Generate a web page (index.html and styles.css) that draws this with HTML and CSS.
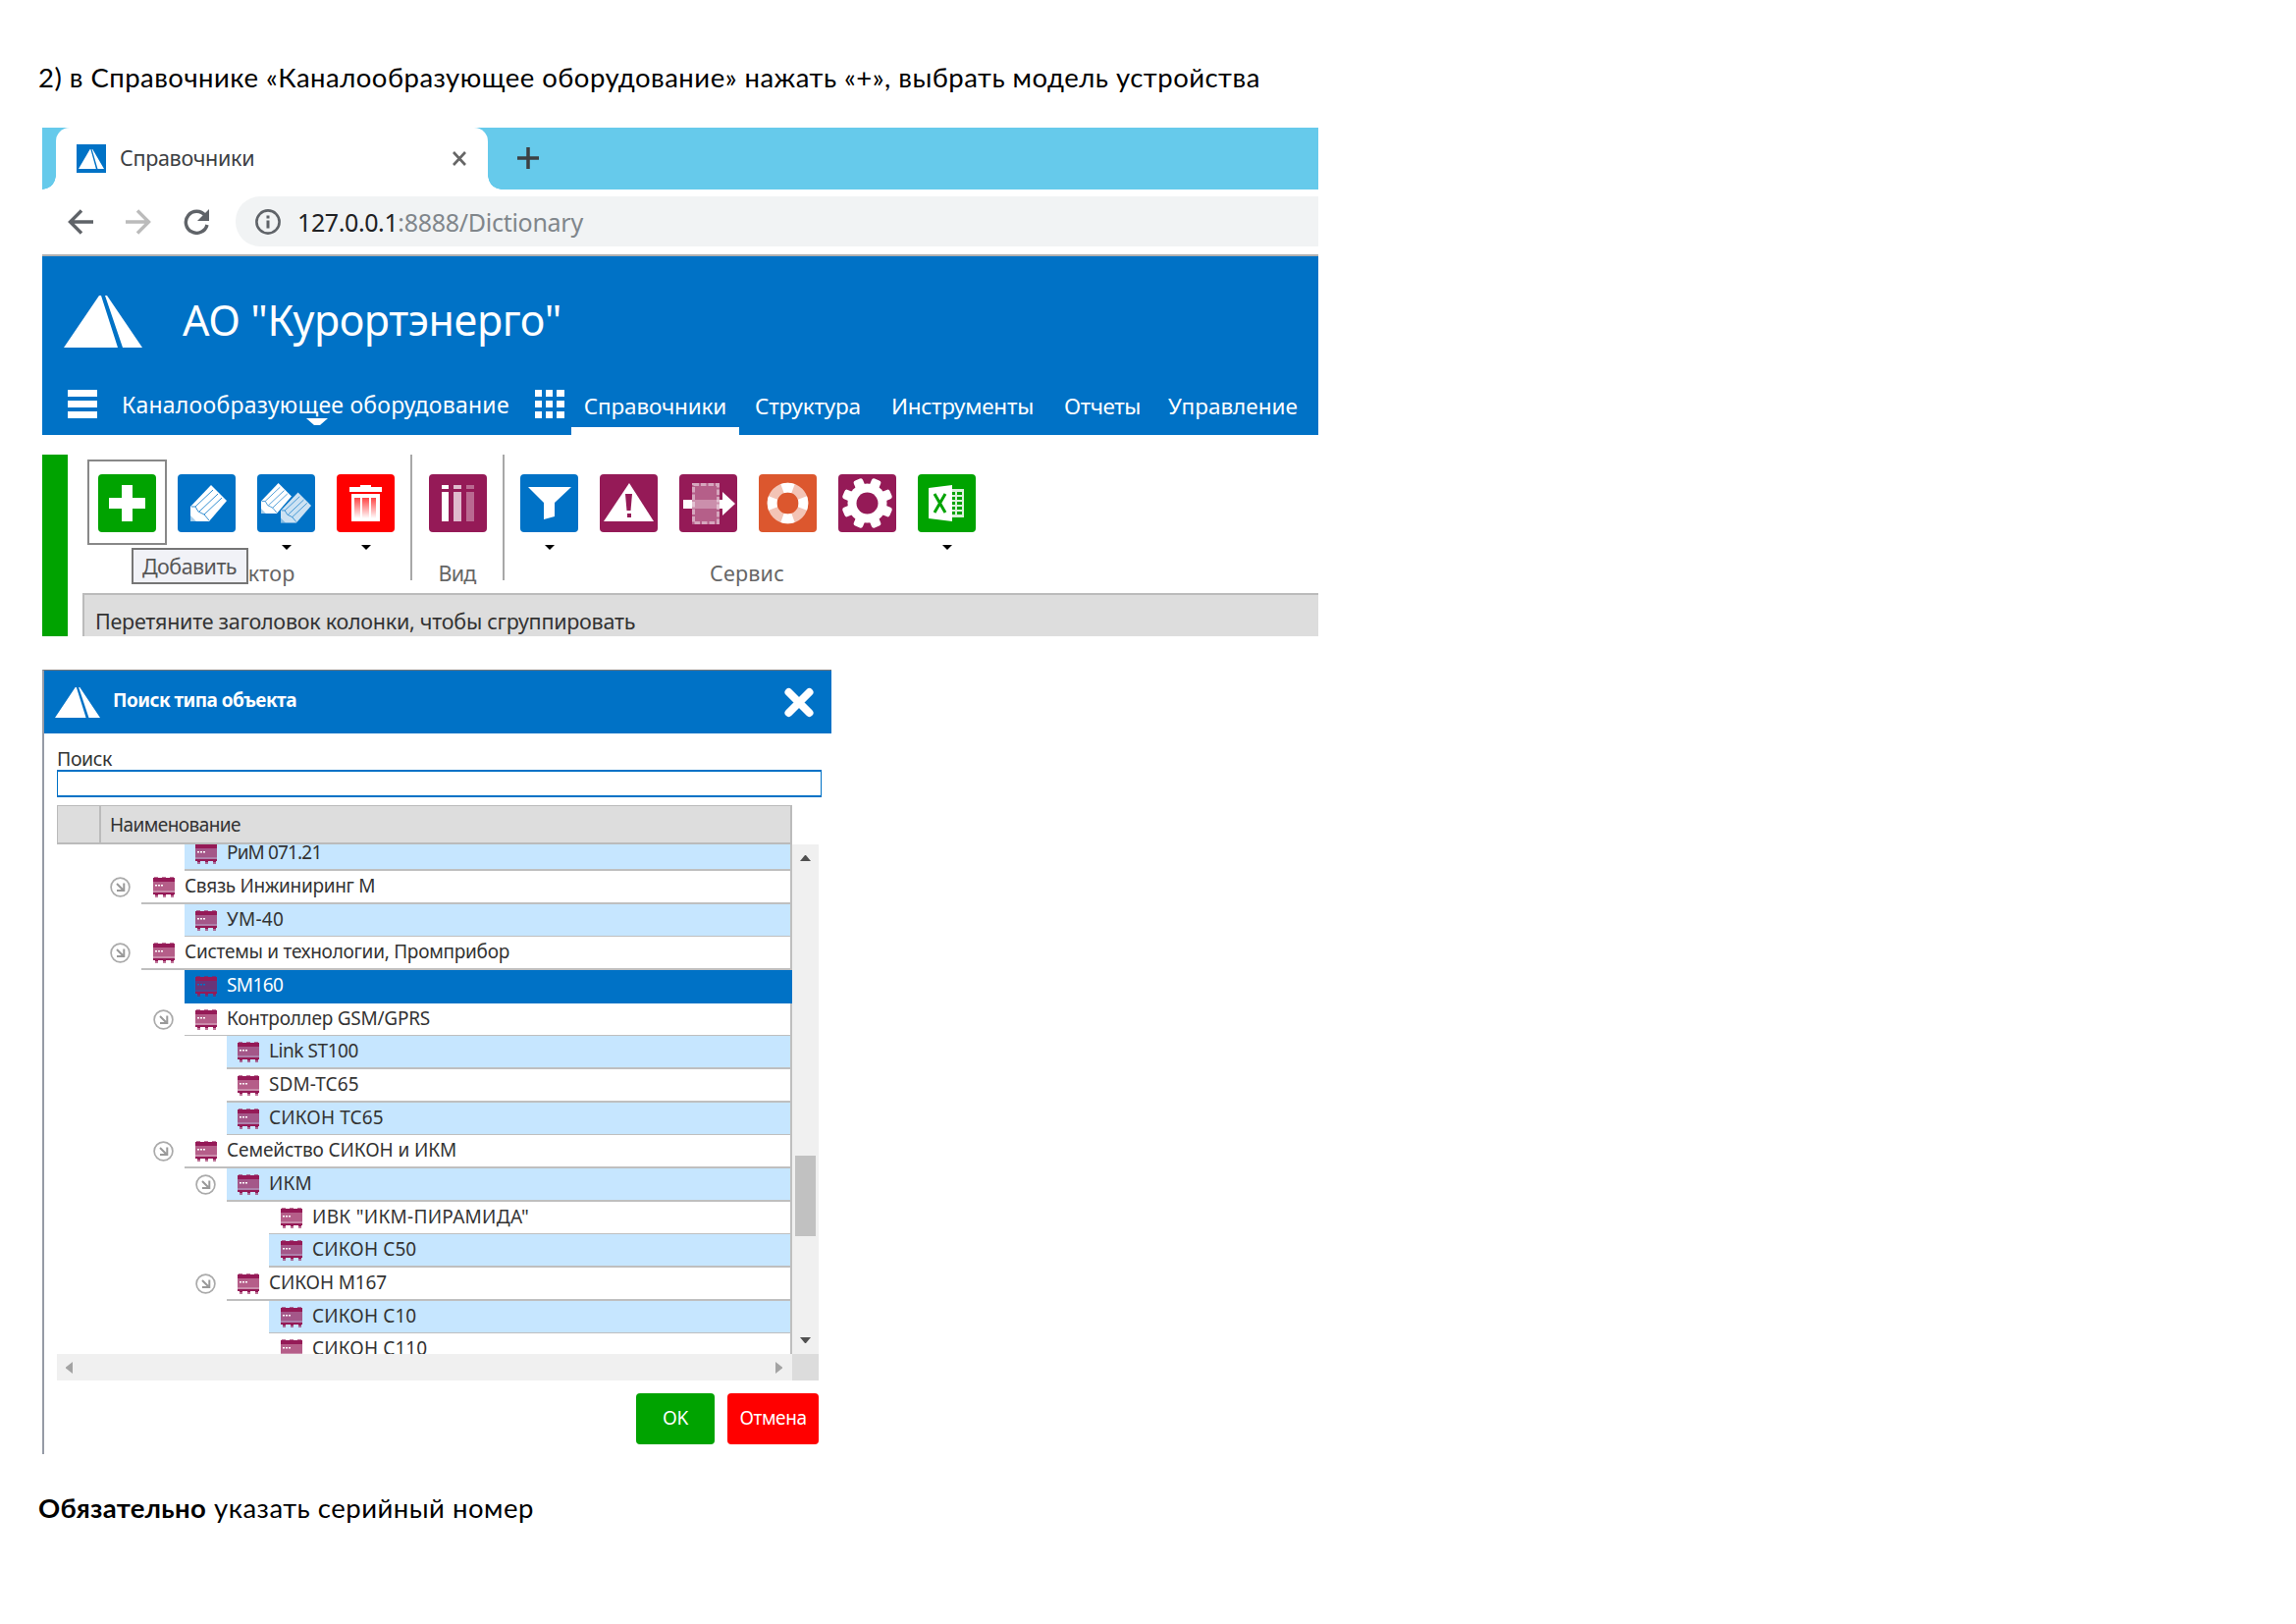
FILE: index.html
```html
<!DOCTYPE html>
<html lang="ru">
<head>
<meta charset="utf-8">
<title>Справочники</title>
<link rel="stylesheet" href="styles.css">
</head>
<body>
<svg class="defs" width="0" height="0">
  <defs>
    <symbol id="logo" viewBox="0 0 80 53" preserveAspectRatio="none"><path fill="#fff" d="M0 53 36 0h2l17 53zM42 0h2l36 53H60z"/></symbol>
    <symbol id="device" viewBox="0 0 22 21">
      <path fill="#951a57" opacity=".6" d="M1 0h4v2h-4zM9 0h4v2h-4zM17 0h4v2h-4zM2 19h3v2H2zM10 19h3v2h-3zM18 19h3v2h-3z"/>
      <path fill="#951a57" d="M0 1h22v4H0zM0 16h22v2H0zM2 17h3v2H2zM10 17h3v2h-3zM18 17h3v2h-3z"/>
      <path fill="#951a57" opacity=".7" d="M0 5h22v9H0z"/>
      <path fill="#951a57" opacity=".5" d="M0 14h22v2H0z"/>
      <path fill="currentColor" d="M2 8h2v1.500H2zM5 8h2v1.500H5zM8 8h2v1.500H8z"/>
    </symbol>
    <symbol id="expand" viewBox="0 0 21 21"><circle cx="10.500" cy="10.500" r="9.400" fill="none" stroke="#aaa" stroke-width="1.700"/><path d="M7 7l6 6M14.300 6.500v7.500H7" fill="none" stroke="#999" stroke-width="2"/></symbol>
    <symbol id="pencil" viewBox="0 0 37 37"><path fill="#fff" d="M21 0 37 16 19 37H0V22z"/><path fill="#0072c6" opacity=".35" d="M0 31l6 6H0z"/><path d="M1 22h4l3 5 6 3 5 6M5 22 23 5M9 27 28 9M14 30 32 13" fill="none" stroke="#0072c6" stroke-width="1" opacity=".8"/></symbol>
    <linearGradient id="fade" x1="0" y1="0" x2="0" y2="1"><stop offset="0" stop-color="#f44"/><stop offset="1" stop-color="#fff"/></linearGradient>
  </defs>
</svg>

<p class="lead">2) в Справочнике «Каналообразующее оборудование» нажать «+», выбрать модель устройства</p>

<section class="browser">
  <div class="tabs">
    <div class="tab-edge"></div>
    <div class="tab">
      <span class="favicon"><svg width="26" height="20"><use href="#logo"/></svg></span>
      <span class="tab-name">Справочники</span>
      <svg class="tab-close" width="14" height="15" viewBox="0 0 14 15"><path d="M1 1l12 13M13 1 1 14" stroke="#666" stroke-width="2.600"/></svg>
    </div>
    <div class="tab-rest"><svg width="22" height="22" viewBox="0 0 22 22"><path d="M11 0v22M0 11h22" stroke="#3c4043" stroke-width="3.500"/></svg></div>
  </div>
  <div class="address">
    <svg width="26" height="26" viewBox="0 0 26 26"><path d="M26 13H3M14 1.500 2.500 13 14 24.500" fill="none" stroke="#5f6368" stroke-width="3.400"/></svg>
    <svg width="26" height="26" viewBox="0 0 26 26"><path d="M0 13h23M12 1.500 23.500 13 12 24.500" fill="none" stroke="#bbb" stroke-width="3.400"/></svg>
    <svg width="26" height="26" viewBox="0 0 26 26"><path d="M22 6.500A11 11 0 1 0 24 16" fill="none" stroke="#5f6368" stroke-width="3.400"/><path d="M26 0v12H14z" fill="#5f6368"/></svg>
    <div class="url">
      <svg width="26" height="26" viewBox="0 0 26 26"><circle cx="13" cy="13" r="11.600" fill="none" stroke="#5f6368" stroke-width="2.600"/><path d="M11.500 6.500h3v3h-3zM11.500 11.500h3v8h-3z" fill="#5f6368"/></svg>
      <span class="url-text"><span class="url-host">127.0.0.1</span><span class="url-path">:8888/Dictionary</span></span>
    </div>
  </div>
  <header class="app-head">
    <div class="brand"><svg width="80" height="53"><use href="#logo"/></svg><h1>АО "Курортэнерго"</h1></div>
    <nav class="menu">
      <svg class="burger" width="30" height="29"><path fill="#fff" d="M0 0h30v7H0zM0 11h30v7H0zM0 22h30v7H0z"/></svg>
      <span class="dict">Каналообразующее оборудование<svg class="dict-caret" width="22" height="7"><path fill="#fff" d="M0 0h22l-8 7H8z"/></svg></span>
      <svg class="apps" width="30" height="29"><path fill="#fff" d="M0 0h7v7H0zM11 0h7v7h-7zM22 0h8v7h-8zM0 11h7v7H0zM11 11h7v7h-7zM22 11h8v7h-8zM0 22h7v7H0zM11 22h7v7h-7zM22 22h8v7h-8z"/></svg>
      <a class="item active i1">Справочники</a>
      <a class="item i2">Структура</a>
      <a class="item i3">Инструменты</a>
      <a class="item i4">Отчеты</a>
      <a class="item i5">Управление</a>
    </nav>
  </header>
  <div class="work">
    <div class="rail"></div>
    <div class="work-main">
      <div class="toolbar">
        <div class="group edit">
          <div class="tools">
            <div class="tool current"><span class="ico green"><svg viewBox="0 0 59 59"><path fill="#fff" d="M24 11h11v13h13v11H35v13H24V35H11V24h13z"/></svg></span></div>
            <div class="tool"><span class="ico blue"><svg viewBox="0 0 59 59"><use href="#pencil" x="13" y="11" width="37" height="37"/></svg></span></div>
            <div class="tool"><span class="ico blue"><svg viewBox="0 0 59 59"><use href="#pencil" x="4" y="9" width="31" height="31"/><use href="#pencil" x="24" y="18" width="31" height="32" opacity=".8"/></svg></span><i class="caret"></i></div>
            <div class="tool"><span class="ico red"><svg viewBox="0 0 59 59"><path fill="#fff" d="M13 13h11v-2h11v2h11v5H13zM15 20h29v28H15z"/><path fill="url(#fade)" d="M18 24h6v21h-6zM26 24h7v21h-7zM35 24h5v21h-5z"/></svg></span><i class="caret"></i></div>
          </div>
          <div class="label">Редактор</div>
        </div>
        <div class="group view">
          <div class="tools"><div class="tool"><span class="ico plum"><svg viewBox="0 0 59 59" fill="#fff"><path d="M13 11h7v4h-7zM13 18h7v30h-7z"/><path opacity=".7" d="M25 11h8v4h-8zM25 18h8v30h-8z"/><path opacity=".35" d="M38 11h8v4h-8zM38 18h8v30h-8z"/></svg></span></div></div>
          <div class="label">Вид</div>
        </div>
        <div class="group service">
          <div class="tools">
            <div class="tool"><span class="ico blue"><svg viewBox="0 0 59 59"><path fill="#fff" d="M8 13h44L35 29v14l-11 3V29z"/></svg></span><i class="caret"></i></div>
            <div class="tool"><span class="ico plum"><svg viewBox="0 0 59 59"><path fill="#fff" d="M30 9 55 48H4z"/><path fill="#951a57" d="M26 20h7l-1.500 17h-4zM28 40h4v4h-4z"/></svg></span></div>
            <div class="tool"><span class="ico plum"><svg viewBox="0 0 59 59" fill="#fff"><path opacity=".3" d="M13 9h28v42H13z"/><path d="M14.500 10.500h25v39h-25z" fill="none" stroke="#fff" stroke-opacity=".45" stroke-width="3" stroke-dasharray="5.500 2"/><path opacity=".3" d="M13 26h28v9H13z"/><path d="M4 26h9v9H4zM44 18l13 12-13 12V35h-3v-9h3z"/></svg></span></div>
            <div class="tool"><span class="ico orange"><svg viewBox="0 0 59 59" fill="none" stroke="#fff" stroke-width="9.800"><circle cx="29.500" cy="29.500" r="15.900" opacity=".65"/><circle cx="29.500" cy="29.500" r="15.900" pathLength="8" stroke-dasharray=".9 1.100" stroke-dashoffset=".45"/></svg></span></div>
            <div class="tool"><span class="ico plum"><svg viewBox="0 0 59 59"><g fill="#fff"><circle cx="29.500" cy="29.500" r="20"/><rect x="24.500" y="3.500" width="10" height="52" rx="2.500" transform="rotate(22.500 29.500 29.500)"/><rect x="24.500" y="3.500" width="10" height="52" rx="2.500" transform="rotate(67.500 29.500 29.500)"/><rect x="24.500" y="3.500" width="10" height="52" rx="2.500" transform="rotate(112.500 29.500 29.500)"/><rect x="24.500" y="3.500" width="10" height="52" rx="2.500" transform="rotate(157.500 29.500 29.500)"/></g><circle cx="29.500" cy="29.500" r="11" fill="#951a57"/></svg></span></div>
            <div class="tool"><span class="ico green"><svg viewBox="0 0 59 59"><path fill="#fff" d="M11 14 35 11v37l-24-3z"/><path fill="#fff" opacity=".85" d="M35 15h12v29H35z"/><path fill="#00a300" d="M35 18h3v3h-3zM40 18h5v3h-5zM35 23h3v3h-3zM40 23h5v3h-5zM35 28h3v3h-3zM40 28h5v3h-5zM35 33h3v3h-3zM40 33h5v3h-5zM35 38h3v3h-3zM40 38h5v3h-5z"/><path d="M17 20l11 19M28 20 17 39" stroke="#00a300" stroke-width="3"/></svg></span><i class="caret"></i></div>
          </div>
          <div class="label">Сервис</div>
        </div>
        <div class="tooltip">Добавить</div>
      </div>
      <div class="grouping">Перетяните заголовок колонки, чтобы сгруппировать</div>
    </div>
  </div>
</section>

<section class="dialog">
  <header class="dialog-head">
    <svg width="46" height="31"><use href="#logo"/></svg>
    <h2>Поиск типа объекта</h2>
    <svg width="30" height="31" viewBox="0 0 30 31"><path d="M4.500 5 25.500 26M25.500 5 4.500 26" stroke="#fff" stroke-width="8" stroke-linecap="round"/></svg>
  </header>
  <div class="dialog-body">
    <label>Поиск</label>
    <div class="field"></div>
    <div class="grid-head"><span></span><span class="col">Наименование</span></div>
    <div class="grid-body">
      <div class="rows">
        <div class="row lb"><div class="cell alt"><svg class="dev"><use href="#device"/></svg>РиМ 071.21</div></div>
        <div class="row la"><svg class="exp"><use href="#expand"/></svg><div class="cell"><svg class="dev"><use href="#device"/></svg>Связь Инжиниринг М</div></div>
        <div class="row lb"><div class="cell alt"><svg class="dev"><use href="#device"/></svg>УМ-40</div></div>
        <div class="row la"><svg class="exp"><use href="#expand"/></svg><div class="cell"><svg class="dev"><use href="#device"/></svg>Системы и технологии, Промприбор</div></div>
        <div class="row lb"><div class="cell selected"><svg class="dev"><use href="#device"/></svg>SM160</div></div>
        <div class="row lb"><svg class="exp"><use href="#expand"/></svg><div class="cell"><svg class="dev"><use href="#device"/></svg>Контроллер GSM/GPRS</div></div>
        <div class="row lc"><div class="cell alt"><svg class="dev"><use href="#device"/></svg>Link ST100</div></div>
        <div class="row lc"><div class="cell"><svg class="dev"><use href="#device"/></svg>SDM-TC65</div></div>
        <div class="row lc"><div class="cell alt"><svg class="dev"><use href="#device"/></svg>СИКОН ТС65</div></div>
        <div class="row lb"><svg class="exp"><use href="#expand"/></svg><div class="cell"><svg class="dev"><use href="#device"/></svg>Семейство СИКОН и ИКМ</div></div>
        <div class="row lc"><svg class="exp"><use href="#expand"/></svg><div class="cell alt"><svg class="dev"><use href="#device"/></svg>ИКМ</div></div>
        <div class="row ld"><div class="cell"><svg class="dev"><use href="#device"/></svg>ИВК "ИКМ-ПИРАМИДА"</div></div>
        <div class="row ld"><div class="cell alt"><svg class="dev"><use href="#device"/></svg>СИКОН С50</div></div>
        <div class="row lc"><svg class="exp"><use href="#expand"/></svg><div class="cell"><svg class="dev"><use href="#device"/></svg>СИКОН М167</div></div>
        <div class="row ld"><div class="cell alt"><svg class="dev"><use href="#device"/></svg>СИКОН С10</div></div>
        <div class="row ld"><div class="cell"><svg class="dev"><use href="#device"/></svg>СИКОН С110</div></div>
      </div>
      <div class="vbar"><svg width="11" height="6"><path fill="#505050" d="M5 0h1l5 6H0z"/></svg><i></i><svg width="11" height="6"><path fill="#505050" d="M0 0h11L6 6H5z"/></svg></div>
    </div>
    <div class="hbar"><div class="htrack"><svg width="7" height="12"><path fill="#a3a3a3" d="M7 0v12L0 6.500v-1z"/></svg><svg width="7" height="12"><path fill="#a3a3a3" d="M0 0v12l7-5.500v-1z"/></svg></div><div class="corner"></div></div>
    <div class="actions"><button class="btn ok">OK</button><button class="btn cancel">Отмена</button></div>
  </div>
</section>

<p class="note"><b>Обязательно</b><span>указать серийный номер</span></p>
</body>
</html>
```
FILE: styles.css
```css
* { box-sizing: border-box; }
body { margin: 0; width: 2339px; height: 1654px; background: #fff; overflow: hidden; font-family: "Noto Sans", "Open Sans", sans-serif; white-space: nowrap; color: #333; display: flex; flex-direction: column; align-items: flex-start; }
svg { display: block; flex: none; }
.defs { position: absolute; }

.lead, .note { margin: 0; font-family: Lato, "Noto Sans", sans-serif; font-size: 27.500px; line-height: 40px; color: #000; }
.lead { padding: 59px 0 0 39px; height: 130px; letter-spacing: .48px; }
.note { padding: 35px 0 0 39px; display: flex; gap: 8px; letter-spacing: .5px; }
.note b { letter-spacing: .28px; }

/* Browser window */
.browser { width: 1300px; margin-left: 43px; height: 518px; }
.tabs { display: flex; height: 63px; background: #66caeb; }
.tab-edge { width: 14px; }
.tab { width: 440px; background: #fff; border-radius: 14px 14px 0 0; display: flex; align-items: flex-start; padding: 17px 22px 0 21px; position: relative; }
.tab::before, .tab::after { content: ""; position: absolute; bottom: 0; width: 14px; height: 14px; }
.tab::before { left: -14px; background: radial-gradient(circle at 0 0, transparent 13.500px, #fff 14px); }
.tab::after { right: -14px; background: radial-gradient(circle at 100% 0, transparent 13.500px, #fff 14px); }
.favicon { width: 30px; height: 29px; background: #0072c6; display: flex; align-items: flex-end; justify-content: center; padding-bottom: 4px; }
.tab-name { font-size: 21.500px; line-height: 28px; margin-left: 14px; flex: 1; color: #3c4043; letter-spacing: -.3px; }
.tab-close { margin-top: 7px; }
.tab-rest { flex: 1; padding: 20px 0 0 30px; }
.address { display: flex; align-items: center; height: 66px; padding-left: 26px; }
.address > svg { margin: 0 33px 1px 0; }
.address > svg:nth-child(3) { margin-right: 27px; }
.url { flex: 1; height: 51px; background: #f1f3f4; border-radius: 25px 0 0 25px; display: flex; align-items: center; padding-left: 20px; margin-bottom: 1px; }
.url-text { margin-left: 17px; font-size: 25px; line-height: 36px; color: #202124; }
.url-host { letter-spacing: -.4px; }
.url-path { color: #80868b; letter-spacing: -.28px; }

/* Application header */
.app-head { height: 184px; border-top: 2px solid #b0b0b0; background: #0072c6; color: #fff; }
.brand { display: flex; padding: 40px 0 0 22px; height: 126px; }
.brand h1 { margin: -5px 0 0 41px; font-weight: 400; font-size: 43px; line-height: 60px; letter-spacing: -.4px; }
.menu { display: flex; height: 56px; padding-left: 26px; }
.burger, .apps { margin-top: 10px; }
.dict { position: relative; margin-left: 25px; width: 421px; font-size: 23px; line-height: 32px; padding-top: 9px; letter-spacing: .25px; }
.dict-caret { position: absolute; left: 188px; top: 39px; }
.item { font-size: 22.500px; line-height: 32px; padding-top: 11px; text-align: center; letter-spacing: -.16px; }
.item.active { border-bottom: 8px solid #fff; }
.i1 { width: 171px; margin-left: 7px; }
.i2 { margin-left: 16px; }
.i3 { margin-left: 31px; letter-spacing: -.26px; }
.i4 { margin-left: 31px; letter-spacing: -.43px; }
.i5 { margin-left: 28px; letter-spacing: 0; }

/* Toolbar */
.work { display: flex; margin-top: 20px; height: 185px; }
.rail { width: 26px; background: #00a300; }
.work-main { flex: 1; padding-left: 15px; }
.toolbar { display: flex; height: 141px; padding-left: 5px; position: relative; }
.group { display: flex; flex-direction: column; justify-content: space-between; height: 128px; }
.edit { width: 331px; border-right: 2px solid #a8a8a8; }
.view { width: 94px; border-right: 2px solid #a8a8a8; padding-left: 17px; }
.service { padding-left: 16px; }
.tools { display: flex; gap: 22px; }
.tool { display: flex; flex-direction: column; align-items: center; padding-top: 20px; }
.tool.current { width: 81px; height: 87px; border: 2px solid #888; margin: 5px -11px 0 0; padding-top: 13px; }
.ico { width: 59px; height: 59px; border-radius: 4px; display: block; }
.ico svg { width: 59px; height: 59px; }
.green { background: #00a300; }
.blue { background: #0072c6; }
.red { background: #f00; }
.plum { background: #951a57; }
.orange { background: #dc572e; }
.caret { margin-top: 13px; border: 5px solid transparent; border-top-color: #000; border-bottom: 0; }
.label { font-size: 21.500px; line-height: 32px; color: #666; margin-bottom: -9px; text-align: center; letter-spacing: .2px; }
.edit .label { padding-right: 4px; }
.view .label { padding-right: 18px; letter-spacing: -.8px; }
.service .label { padding-right: 2px; }
.tooltip { position: absolute; left: 50px; top: 95px; width: 119px; height: 37px; border: 2px solid #767676; background: #f1f2f7; font-size: 21.500px; line-height: 33px; color: #575757; padding-left: 9px; letter-spacing: -.55px; }
.grouping { height: 44px; border: solid #bbb; border-width: 2px 0 0 2px; background: #ddd; font-size: 21.500px; line-height: 35px; padding: 9px 0 0 11px; overflow: hidden; letter-spacing: -.26px; }

/* Object type dialog */
.dialog { width: 804px; height: 799px; margin: 34px 0 0 43px; border-left: 2px solid #969ba6; border-top: 1px solid #777; }
.dialog-head { height: 64px; background: #0072c6; color: #fff; display: flex; align-items: center; padding: 0 18px 0 11px; }
.dialog-head h2 { flex: 1; margin: -4px 0 0 13px; font-size: 19px; line-height: 28px; letter-spacing: -.54px; }
.dialog-body { padding: 19px 10px 0 13px; font-size: 19px; }
.dialog label { display: block; height: 18px; line-height: 13px; font-size: 19.500px; letter-spacing: -.4px; }
.field { height: 28px; border: solid #0072c6; border-width: 2px 1px; margin-bottom: 8px; }
.grid-head { width: 749px; height: 40px; display: flex; background: #ddd; border: solid #bbb; border-width: 1px 2px 2px 1px; }
.grid-head > span:first-child { width: 44px; border-right: 2px solid #bbb; }
.col { padding-left: 9px; line-height: 38px; letter-spacing: -.56px; }
.grid-body { display: flex; height: 519px; overflow: hidden; }
.rows { width: 749px; display: flex; flex-direction: column; background: linear-gradient(#bfbfbf, #bfbfbf) right / 2px 100% no-repeat; }
.row { display: flex; justify-content: flex-end; flex: none; height: 34px; letter-spacing: .1px; }
.row:first-child { margin-top: -7px; }
.row:nth-child(3n) { height: 33px; }
.exp { width: 21px; height: 21px; margin: 6px 11px 0 0; }
.cell { display: flex; margin-right: 2px; border-bottom: 2px solid #bfbfbf; padding-left: 11px; line-height: 31px; }
.row:nth-child(3n) .cell { border-bottom-width: 1px; }
.la .cell { width: 661px; padding-left: 12px; }
.lb .cell { width: 617px; }
.lc .cell { width: 574px; }
.ld .cell { width: 531px; padding-left: 12px; }
.dev { width: 22px; height: 21px; margin: 6px 10px 0 0; color: #fff; }
.row:nth-child(1) { letter-spacing: -.85px; }
.row:nth-child(2) { letter-spacing: -.31px; }
.row:nth-child(3) { letter-spacing: .24px; }
.row:nth-child(4) { letter-spacing: -.26px; }
.row:nth-child(5) { letter-spacing: -.6px; }
.row:nth-child(6) { letter-spacing: -.24px; }
.row:nth-child(7) { letter-spacing: -.43px; }
.row:nth-child(10) { letter-spacing: -.11px; }
.row:nth-child(12) { letter-spacing: .29px; }
.row:nth-child(14) { letter-spacing: -.14px; }
.alt { background: #c6e6ff; }
.row .selected { background: #0072c6; color: #fff; border-bottom: 0; margin-right: 0; width: 619px; }
.selected .dev { color: #0072c6; }
.vbar { width: 27px; background: #f0f0f0; display: flex; flex-direction: column; align-items: center; padding-top: 11px; }
.vbar i { width: 21px; height: 82px; background: #c1c1c1; margin: 300px 0 103px; }
.hbar { display: flex; height: 27px; }
.htrack { width: 749px; background: #f0f0f0; display: flex; justify-content: space-between; align-items: center; padding: 0 10px 0 9px; }
.corner { width: 27px; background: #dcdcdc; }
.actions { display: flex; justify-content: flex-end; gap: 13px; padding: 13px 3px 0 0; }
.btn { height: 52px; border: 0; border-radius: 4px; color: #fff; font: 19px/28px "Noto Sans", sans-serif; padding: 0 0 3px; letter-spacing: -.4px; }
.ok { width: 80px; background: #00a300; }
.cancel { width: 93px; background: #f00; }
```
